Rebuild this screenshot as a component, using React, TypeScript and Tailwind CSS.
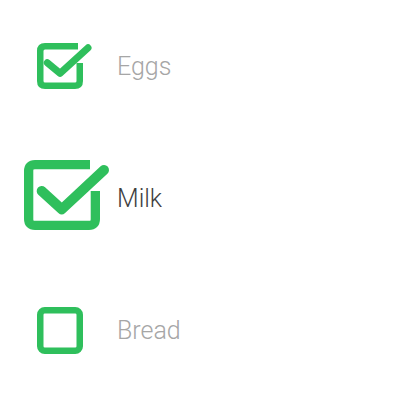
import React from "react";

const G = "#2fbf5c";

function Row({ children, label, dark }: { children: React.ReactNode; label: string; dark?: boolean }) {
  return (
    <div className="flex h-[132px] items-center">
      <svg width="117" height="132" viewBox="0 0 117 132" className="shrink-0">
        {children}
      </svg>
      <span
        className={`text-[25px] font-light leading-none ${dark ? "text-[#3f3f3f]" : "text-[#a6a6a6]"}`}
        style={{ fontFamily: "Roboto, sans-serif" }}
      >
        {label}
      </span>
    </div>
  );
}

export default function App() {
  return (
    <div className="w-[400px] h-[400px] bg-white flex flex-col">
      <Row label="Eggs">
        <path
          d="M78 46.25 H45 Q40.25 46.25 40.25 51 V81 Q40.25 85.75 45 85.75 H75 Q79.75 85.75 79.75 81 V63"
          fill="none"
          stroke={G}
          strokeWidth="6.5"
        />
        <path d="M47.3 62.7 L60 73.3 L88 47.8" fill="none" stroke={G} strokeWidth="7" strokeLinecap="round" strokeLinejoin="round" />
      </Row>
      <Row label="Milk" dark>
        <path
          d="M90 32.65 H35 Q28.65 32.65 28.65 39 V87 Q28.65 93.35 35 93.35 H89 Q95.35 93.35 95.35 87 V59"
          fill="none"
          stroke={G}
          strokeWidth="9.3"
        />
        <path d="M41.7 59 L61.7 77.3 L104 38" fill="none" stroke={G} strokeWidth="10" strokeLinecap="round" strokeLinejoin="round" />
      </Row>
      <Row label="Bread">
        <rect x="40.25" y="46.25" width="39.5" height="40.5" rx="4.5" fill="none" stroke={G} strokeWidth="6.5" />
      </Row>
    </div>
  );
}
